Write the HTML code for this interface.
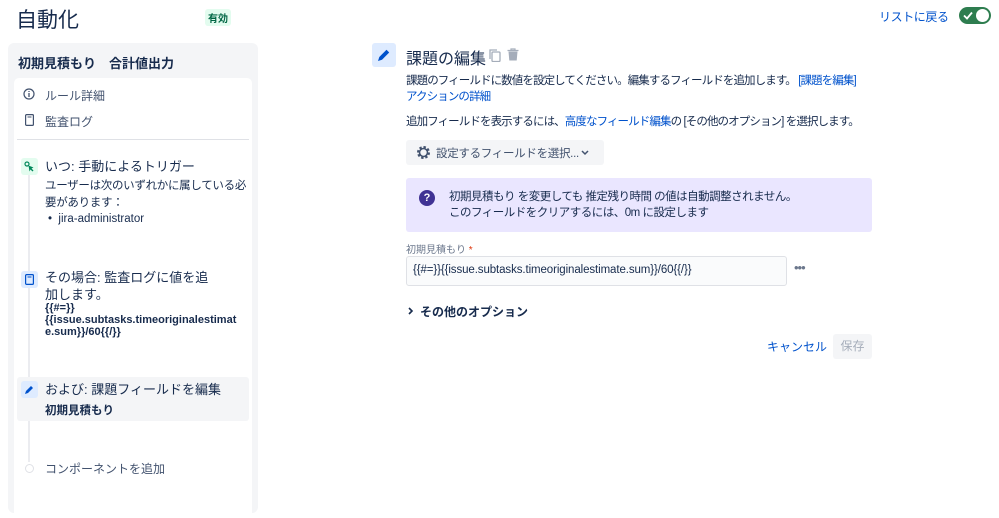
<!DOCTYPE html>
<html><head><meta charset="utf-8"><style>
*{box-sizing:border-box;margin:0;padding:0}
body{width:999px;height:506px;overflow:hidden;background:#fff;font-family:"Liberation Sans","Noto Sans CJK JP",sans-serif;color:#172b4d;position:relative}
.a{position:absolute;white-space:nowrap}
a{color:#0052cc;text-decoration:none}
</style></head><body>
<div class="a" style="left:16px;top:4px;font-size:21px;color:#172b4d">自動化</div>
<div class="a" style="left:205px;top:9px;font-size:10px;font-weight:bold;color:#006644;background:#e3fcef;padding:1px 3px;border-radius:3px">有効</div>
<div class="a" style="left:879px;top:8px;font-size:12px;color:#0052cc;letter-spacing:-0.4px">リストに戻る</div>
<div class="a" style="left:959px;top:7px;width:32px;height:17px;border-radius:9px;background:#2e7d4f"></div>
<div class="a" style="left:976px;top:9px;width:13px;height:13px;border-radius:50%;background:#fff"></div>
<svg class="a" style="left:963px;top:11px" width="10" height="9" viewBox="0 0 10 9"><path d="M1 4.5l3 3L9 1.5" stroke="#fff" stroke-width="1.8" fill="none"/></svg>

<div class="a" style="left:8px;top:43px;width:250px;height:470px;background:#f4f5f7;border-radius:6px"></div>
<div class="a" style="left:18px;top:53px;font-size:13px;font-weight:bold">初期見積もり　合計値出力</div>
<div class="a" style="left:14px;top:78px;width:238px;height:440px;background:#fff;border-radius:5px"></div>
<svg class="a" style="left:23px;top:88px" width="12" height="12" viewBox="0 0 12 12"><circle cx="6" cy="6" r="5" fill="none" stroke="#42526e" stroke-width="1.2"/><path d="M6 5v4M6 3v1" stroke="#42526e" stroke-width="1.3"/></svg>
<div class="a" style="left:45px;top:87px;font-size:12px;color:#42526e">ルール詳細</div>
<svg class="a" style="left:25px;top:114px" width="9" height="12" viewBox="0 0 9 12"><rect x="0.6" y="0.6" width="7.8" height="10.8" rx="1" fill="none" stroke="#42526e" stroke-width="1.2"/><path d="M2.5 3h4" stroke="#42526e"/></svg>
<div class="a" style="left:45px;top:113px;font-size:12px;color:#42526e">監査ログ</div>
<div class="a" style="left:17px;top:139px;width:232px;height:1px;background:#dfe1e6"></div>
<div class="a" style="left:28px;top:172px;width:2px;height:290px;background:#ebecf0"></div>
<div class="a" style="left:21px;top:158px;width:17px;height:17px;background:#e3fcef;border-radius:3px"></div>
<svg class="a" style="left:24px;top:161px" width="11" height="11" viewBox="0 0 11 11"><circle cx="3" cy="3" r="2" fill="none" stroke="#00875a" stroke-width="1.2"/><path d="M4.5 4.5l5 2-2 1 2 2-1 1-2-2-1 2z" fill="#00875a"/></svg>
<div class="a" style="left:45px;top:156px;font-size:13px">いつ: 手動によるトリガー</div>
<div class="a" style="left:45px;top:178px;font-size:11.5px;line-height:17px;color:#172b4d;white-space:normal;width:202px;letter-spacing:-0.3px">ユーザーは次のいずれかに属している必要があります：</div>
<div class="a" style="left:48px;top:213px;font-size:11.5px">•&nbsp; jira-administrator</div>

<div class="a" style="left:21px;top:271px;width:17px;height:17px;background:#deebff;border-radius:3px"></div>
<svg class="a" style="left:25px;top:274px" width="9" height="11" viewBox="0 0 9 11"><rect x="0.6" y="0.6" width="7.8" height="9.8" rx="1" fill="none" stroke="#0052cc" stroke-width="1.2"/><path d="M2.5 3h4" stroke="#0052cc"/></svg>
<div class="a" style="left:45px;top:269px;font-size:13px;line-height:17px;white-space:normal;width:170px">その場合: 監査ログに値を追加します。</div>
<div class="a" style="left:45px;top:302px;font-size:11px;line-height:12px;font-weight:bold;white-space:normal;width:197px;word-break:break-all">{{#=}}<br>{{issue.subtasks.timeoriginalestimate.sum}}/60{{/}}</div>

<div class="a" style="left:17px;top:377px;width:232px;height:44px;background:#f4f5f7;border-radius:3px"></div>
<div class="a" style="left:21px;top:381px;width:17px;height:17px;background:#deebff;border-radius:3px"></div>
<svg class="a" style="left:24px;top:384px" width="11" height="11" viewBox="0 0 11 11"><path d="M1 10l1-3 5-5 2 2-5 5z" fill="#0052cc"/></svg>
<div class="a" style="left:45px;top:379px;font-size:13px">および: 課題フィールドを編集</div>
<div class="a" style="left:45px;top:402px;font-size:11.5px;font-weight:bold">初期見積もり</div>
<div class="a" style="left:25px;top:464px;width:9px;height:9px;border-radius:50%;border:1.3px solid #dfe1e6;background:#fff"></div>
<div class="a" style="left:45px;top:460px;font-size:12px;color:#42526e">コンポーネントを追加</div>

<div class="a" style="left:372px;top:43px;width:24px;height:24px;background:#deebff;border-radius:3px"></div>
<svg class="a" style="left:377px;top:48px" width="14" height="14" viewBox="0 0 14 14"><path d="M1 13l1.3-4L9.5 1.8l2.7 2.7L5 11.7z" fill="#0052cc"/></svg>
<div class="a" style="left:406px;top:45px;font-size:16px">課題の編集</div>
<svg class="a" style="left:489px;top:49px" width="12" height="13" viewBox="0 0 12 13"><rect x="3" y="3" width="8" height="9.5" rx="1" fill="none" stroke="#a5adba" stroke-width="1.3"/><path d="M1 10V1h7" fill="none" stroke="#a5adba" stroke-width="1.3"/></svg>
<svg class="a" style="left:507px;top:48px" width="12" height="13" viewBox="0 0 12 13"><path d="M0.5 2.5h11M4 2.5V1h4v1.5" stroke="#a5adba" stroke-width="1.2" fill="none"/><path d="M1.5 3.5h9l-.8 9h-7.4z" fill="#a5adba"/></svg>
<div class="a" style="left:406px;top:73px;font-size:11.5px;line-height:16px;color:#172b4d;letter-spacing:-0.9px">課題のフィールドに数値を設定してください。編集するフィールドを追加します。 <a>[課題を編集]</a><br><a>アクションの詳細</a></div>
<div class="a" style="left:406px;top:113px;font-size:11.5px;color:#172b4d;letter-spacing:-0.9px">追加フィールドを表示するには、<a>高度なフィールド編集</a>の [その他のオプション] を選択します。</div>
<div class="a" style="left:406px;top:140px;width:198px;height:25px;background:#f4f5f7;border-radius:3px"></div>
<svg class="a" style="left:416px;top:145px" width="15" height="15" viewBox="0 0 15 15"><circle cx="7.5" cy="7.5" r="5" fill="none" stroke="#42526e" stroke-width="3" stroke-dasharray="2.2 1.7"/><circle cx="7.5" cy="7.5" r="4" fill="none" stroke="#42526e" stroke-width="1.6"/></svg>
<div class="a" style="left:436px;top:145px;font-size:11.5px;color:#42526e;letter-spacing:-0.3px">設定するフィールドを選択...</div>
<svg class="a" style="left:581px;top:150px" width="8" height="6" viewBox="0 0 8 6"><path d="M1 1l3 3 3-3" stroke="#42526e" stroke-width="1.5" fill="none"/></svg>
<div class="a" style="left:406px;top:178px;width:466px;height:54px;background:#eae6ff;border-radius:3px"></div>
<div class="a" style="left:419px;top:190px;width:16px;height:16px;border-radius:50%;background:#403294;color:#fff;font-size:11px;font-weight:bold;text-align:center;line-height:16px">?</div>
<div class="a" style="left:449px;top:189px;font-size:11.5px;line-height:16px;color:#172b4d;letter-spacing:-0.5px">初期見積もり を変更しても 推定残り時間 の値は自動調整されません。<br>このフィールドをクリアするには、0m に設定します</div>
<div class="a" style="left:406px;top:241px;font-size:10px;color:#6b778c">初期見積もり <span style="color:#de350b">*</span></div>
<div class="a" style="left:406px;top:256px;width:381px;height:30px;background:#fafbfc;border:1.5px solid #dfe1e6;border-radius:3px"></div>
<div class="a" style="left:413px;top:264px;font-size:11.5px;color:#172b4d;letter-spacing:-0.1px">{{#=}}{{issue.subtasks.timeoriginalestimate.sum}}/60{{/}}</div>
<div class="a" style="left:794px;top:260px;font-size:13px;color:#6b778c;letter-spacing:-1px">•••</div>
<svg class="a" style="left:408px;top:307px" width="6" height="8" viewBox="0 0 6 8"><path d="M1 1l3 3-3 3" stroke="#172b4d" stroke-width="1.6" fill="none"/></svg>
<div class="a" style="left:420px;top:303px;font-size:12px;font-weight:bold">その他のオプション</div>
<div class="a" style="left:767px;top:338px;font-size:12px;color:#0052cc">キャンセル</div>
<div class="a" style="left:833px;top:334px;width:39px;height:25px;background:#f4f5f7;border-radius:3px;color:#a5adba;font-size:12px;text-align:center;line-height:25px">保存</div>
</body></html>
